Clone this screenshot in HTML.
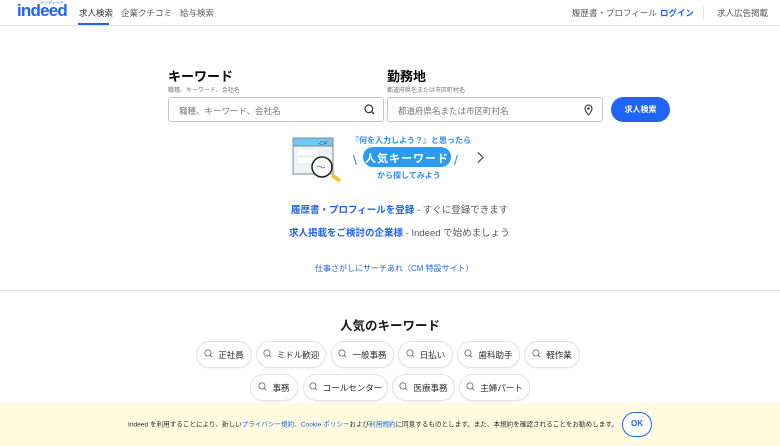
<!DOCTYPE html>
<html><head><meta charset="utf-8"><style>
*{margin:0;padding:0;box-sizing:border-box}
body{width:780px;height:446px;overflow:hidden;background:#fff;font-family:"Liberation Sans","Noto Sans CJK JP",sans-serif;color:#2d2d2d;position:relative}
.a{position:absolute;white-space:nowrap}
.hdr{position:absolute;left:0;top:0;width:780px;height:26px;border-bottom:1px solid #e4e2e0}
.tab{font-size:8.5px;color:#595959;top:7px}
.inp{position:absolute;height:25px;border:1px solid #c8c8c8;border-radius:3px;font-size:8.5px;color:#767676;padding:7px 0 0 10px}
.chip{position:absolute;height:27px;border:1px solid #e4e2e0;border-radius:14px;font-size:8.5px;color:#2d2d2d;padding:7px 0 0 0;text-align:center;box-shadow:0 1px 2px rgba(0,0,0,.06)}
.chip svg{vertical-align:0px;margin-right:5px}
.blue{color:#2164f3}
</style></head><body>
<div class="hdr"></div>
<div class="a" style="left:17px;top:1px;font-size:17px;font-weight:bold;color:#2164f3;letter-spacing:-0.8px">indeed</div>
<div class="a" style="left:40px;top:0px;font-size:4px;color:#2164f3">インディード</div>
<div class="a tab" style="left:79px;color:#2d2d2d">求人検索</div>
<div class="a" style="left:78px;top:23px;width:31px;height:2px;background:#2164f3"></div>
<div class="a tab" style="left:121px">企業クチコミ</div>
<div class="a tab" style="left:180px">給与検索</div>
<div class="a tab" style="left:572px">履歴書・プロフィール</div>
<div class="a tab" style="left:660px;color:#2164f3;font-weight:bold">ログイン</div>
<div class="a" style="left:703px;top:6px;width:1px;height:14px;background:#e4e2e0"></div>
<div class="a tab" style="left:717px">求人広告掲載</div>

<div class="a" style="left:168px;top:66px;font-size:13px;font-weight:bold;color:#000">キーワード</div>
<div class="a" style="left:168px;top:85px;font-size:6px;color:#767676">職種、キーワード、会社名</div>
<div class="inp" style="left:168px;top:97px;width:216px">職種、キーワード、会社名</div>
<svg class="a" style="left:364px;top:104px" width="11" height="11" viewBox="0 0 11 11"><circle cx="4.8" cy="4.8" r="3.8" fill="none" stroke="#2d2d2d" stroke-width="1.2"/><path d="M7.6 7.6L10 10" stroke="#2d2d2d" stroke-width="1.3"/></svg>
<div class="a" style="left:387px;top:66px;font-size:13px;font-weight:bold;color:#000">勤務地</div>
<div class="a" style="left:387px;top:85px;font-size:6px;color:#767676">都道府県名または市区町村名</div>
<div class="inp" style="left:387px;top:97px;width:216px">都道府県名または市区町村名</div>
<svg class="a" style="left:584px;top:104px" width="9" height="12" viewBox="0 0 9 12"><path d="M4.5 11C2 8 1 6 1 4.5a3.5 3.5 0 0 1 7 0C8 6 7 8 4.5 11z" fill="none" stroke="#2d2d2d" stroke-width="1"/><circle cx="4.5" cy="4.5" r="1.2" fill="#2d2d2d"/></svg>
<div class="a" style="left:611px;top:97px;width:59px;height:25px;border-radius:13px;background:#2164f3;color:#fff;font-size:8px;font-weight:bold;text-align:center;padding-top:7px">求人検索</div>

<svg class="a" style="left:290px;top:135px" width="70" height="50" viewBox="0 0 70 50">
<rect x="3" y="3" width="40" height="36" fill="#eef1f6" stroke="#888" stroke-width="1"/>
<rect x="3" y="3" width="40" height="8" fill="#6cc8f5" stroke="#888" stroke-width="1"/>
<text x="28" y="10" font-size="6" fill="#333" font-family="Liberation Sans">-□×</text>
<rect x="8" y="15" width="20" height="5" fill="#fff"/><rect x="8" y="23" width="20" height="5" fill="#fff"/>
<path d="M42 40l8 6" stroke="#f5c542" stroke-width="4"/>
<circle cx="32" cy="32" r="10" fill="#fff" stroke="#222" stroke-width="1.5"/>
<path d="M27 32q2-2 4 0t4 0" fill="none" stroke="#555" stroke-width=".7"/>
</svg>
<div class="a" style="left:351px;top:135px;font-size:8px;font-weight:bold;color:#2b8ef0">『何を入力しよう？』と思ったら</div>
<div class="a" style="left:363px;top:147px;width:88px;height:20px;border-radius:10px;background:#2b9af3;color:#fff;font-size:11px;font-weight:bold;text-align:center;padding-top:3px;letter-spacing:1px">人気キーワード</div>
<div class="a" style="left:353px;top:152px;font-size:14px;color:#2b8ef0">\</div>
<div class="a" style="left:454px;top:152px;font-size:14px;color:#2b8ef0">/</div>
<div class="a" style="left:377px;top:170px;font-size:8px;font-weight:bold;color:#2b8ef0">から探してみよう</div>
<svg class="a" style="left:476px;top:151px" width="9" height="13" viewBox="0 0 9 13"><path d="M2 1.5l5 5-5 5" fill="none" stroke="#555" stroke-width="1.3"/></svg>

<div class="a" style="left:291px;top:202px;font-size:9.5px"><b class="blue">履歴書・プロフィールを登録</b> <span style="color:#595959">- すぐに登録できます</span></div>
<div class="a" style="left:289px;top:225px;font-size:9.5px"><b class="blue">求人掲載をご検討の企業様</b> <span style="color:#595959">- Indeed で始めましょう</span></div>
<div class="a blue" style="left:315px;top:263px;font-size:8px">仕事さがしにサーチあれ（CM 特設サイト）</div>
<div class="a" style="left:0;top:290px;width:780px;height:1px;background:#e4e2e0"></div>

<div class="a" style="left:0;top:315px;width:780px;text-align:center;font-size:12.5px;font-weight:bold;color:#1a1a1a">人気のキーワード</div>

<div class="chip" style="left:196px;top:341px;width:56px"><svg width="9" height="9" viewBox="0 0 11 11"><circle cx="4.8" cy="4.8" r="3.8" fill="none" stroke="#767676" stroke-width="1.1"/><path d="M7.6 7.6L10 10" stroke="#767676" stroke-width="1.2"/></svg>正社員</div>
<div class="chip" style="left:256px;top:341px;width:70px"><svg width="9" height="9" viewBox="0 0 11 11"><circle cx="4.8" cy="4.8" r="3.8" fill="none" stroke="#767676" stroke-width="1.1"/><path d="M7.6 7.6L10 10" stroke="#767676" stroke-width="1.2"/></svg>ミドル歓迎</div>
<div class="chip" style="left:331px;top:341px;width:63px"><svg width="9" height="9" viewBox="0 0 11 11"><circle cx="4.8" cy="4.8" r="3.8" fill="none" stroke="#767676" stroke-width="1.1"/><path d="M7.6 7.6L10 10" stroke="#767676" stroke-width="1.2"/></svg>一般事務</div>
<div class="chip" style="left:398px;top:341px;width:55px"><svg width="9" height="9" viewBox="0 0 11 11"><circle cx="4.8" cy="4.8" r="3.8" fill="none" stroke="#767676" stroke-width="1.1"/><path d="M7.6 7.6L10 10" stroke="#767676" stroke-width="1.2"/></svg>日払い</div>
<div class="chip" style="left:457px;top:341px;width:63px"><svg width="9" height="9" viewBox="0 0 11 11"><circle cx="4.8" cy="4.8" r="3.8" fill="none" stroke="#767676" stroke-width="1.1"/><path d="M7.6 7.6L10 10" stroke="#767676" stroke-width="1.2"/></svg>歯科助手</div>
<div class="chip" style="left:524px;top:341px;width:56px"><svg width="9" height="9" viewBox="0 0 11 11"><circle cx="4.8" cy="4.8" r="3.8" fill="none" stroke="#767676" stroke-width="1.1"/><path d="M7.6 7.6L10 10" stroke="#767676" stroke-width="1.2"/></svg>軽作業</div>
<div class="chip" style="left:250px;top:374px;width:48px"><svg width="9" height="9" viewBox="0 0 11 11"><circle cx="4.8" cy="4.8" r="3.8" fill="none" stroke="#767676" stroke-width="1.1"/><path d="M7.6 7.6L10 10" stroke="#767676" stroke-width="1.2"/></svg>事務</div>
<div class="chip" style="left:303px;top:374px;width:85px"><svg width="9" height="9" viewBox="0 0 11 11"><circle cx="4.8" cy="4.8" r="3.8" fill="none" stroke="#767676" stroke-width="1.1"/><path d="M7.6 7.6L10 10" stroke="#767676" stroke-width="1.2"/></svg>コールセンター</div>
<div class="chip" style="left:392px;top:374px;width:63px"><svg width="9" height="9" viewBox="0 0 11 11"><circle cx="4.8" cy="4.8" r="3.8" fill="none" stroke="#767676" stroke-width="1.1"/><path d="M7.6 7.6L10 10" stroke="#767676" stroke-width="1.2"/></svg>医療事務</div>
<div class="chip" style="left:459px;top:374px;width:71px"><svg width="9" height="9" viewBox="0 0 11 11"><circle cx="4.8" cy="4.8" r="3.8" fill="none" stroke="#767676" stroke-width="1.1"/><path d="M7.6 7.6L10 10" stroke="#767676" stroke-width="1.2"/></svg>主婦パート</div>

<div class="a" style="left:0;top:403px;width:780px;height:43px;background:#fffbdf"></div>
<div class="a" style="left:128px;top:420px;font-size:7px;color:#2d2d2d;transform:scale(0.94);transform-origin:0 0">Indeed を利用することにより、新しい<span class="blue">プライバシー規約</span>、<span class="blue">Cookie ポリシー</span>および<span class="blue">利用規約</span>に同意するものとします。また、本規約を確認されることをお勧めします。</div>
<div class="a" style="left:622px;top:412px;width:30px;height:25px;border:1.5px solid #2164f3;border-radius:13px;background:#fff;color:#2164f3;font-size:8px;font-weight:bold;text-align:center;padding-top:6px">OK</div>
</body></html>
